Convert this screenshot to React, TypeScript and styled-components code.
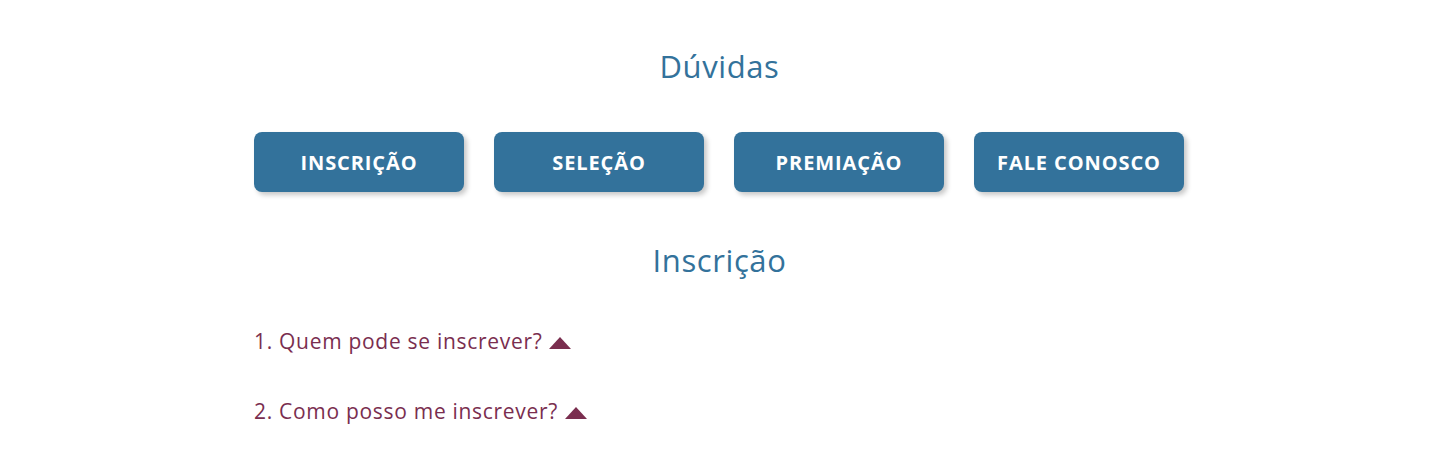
import styled, { createGlobalStyle } from 'styled-components';

const GlobalStyle = createGlobalStyle`
  body {
    margin: 0;
    background: #ffffff;
    font-family: 'Open Sans', 'Noto Sans', sans-serif;
  }
`;

const PageWrap = styled.main`
  width: 931px;
  margin: 0 auto;
  padding-top: 45px;
  display: flex;
  flex-direction: column;
`;

const SectionTitle = styled.h2<{ $gap: number }>`
  margin: 0 0 ${(p) => p.$gap}px;
  font-size: 31px;
  line-height: 42px;
  font-weight: 400;
  letter-spacing: 0.6px;
  color: #33729b;
  text-align: center;
`;

const TabBar = styled.nav`
  display: flex;
  gap: 30px;
  margin-bottom: 47px;
`;

const TabButton = styled.button`
  width: 210px;
  height: 60px;
  padding: 0;
  border: none;
  border-radius: 8px;
  background: #33729b;
  color: #ffffff;
  font-family: inherit;
  font-size: 20px;
  font-weight: 700;
  letter-spacing: 0.9px;
  box-shadow: 3px 3px 5px rgba(0, 0, 0, 0.22);
  cursor: pointer;
`;

const QuestionList = styled.ul`
  list-style: none;
  margin: 0;
  padding: 0;
  display: flex;
  flex-direction: column;
  gap: 41px;
`;

const Question = styled.li`
  display: flex;
  align-items: center;
  gap: 7px;
  font-size: 21px;
  line-height: 29px;
  letter-spacing: 0.7px;
  color: #7a2e4f;
  cursor: pointer;
`;

const Caret = styled.svg`
  width: 22px;
  height: 12px;
  flex: 0 0 auto;
  margin-top: 2px;
`;

const tabs = ['INSCRIÇÃO', 'SELEÇÃO', 'PREMIAÇÃO', 'FALE CONOSCO'];

const questions = ['1. Quem pode se inscrever?', '2. Como posso me inscrever?'];

export default function App() {
  return (
    <>
      <GlobalStyle />
      <PageWrap>
        <SectionTitle $gap={45}>Dúvidas</SectionTitle>

        <TabBar>
          {tabs.map((t) => (
            <TabButton key={t}>{t}</TabButton>
          ))}
        </TabBar>

        <SectionTitle $gap={46}>Inscrição</SectionTitle>

        <QuestionList>
          {questions.map((q) => (
            <Question key={q}>
              {q}
              <Caret viewBox="0 0 22 12">
                <path d="M11 0 L22 12 L0 12 Z" fill="#7a2e4f" />
              </Caret>
            </Question>
          ))}
        </QuestionList>
      </PageWrap>
    </>
  );
}
